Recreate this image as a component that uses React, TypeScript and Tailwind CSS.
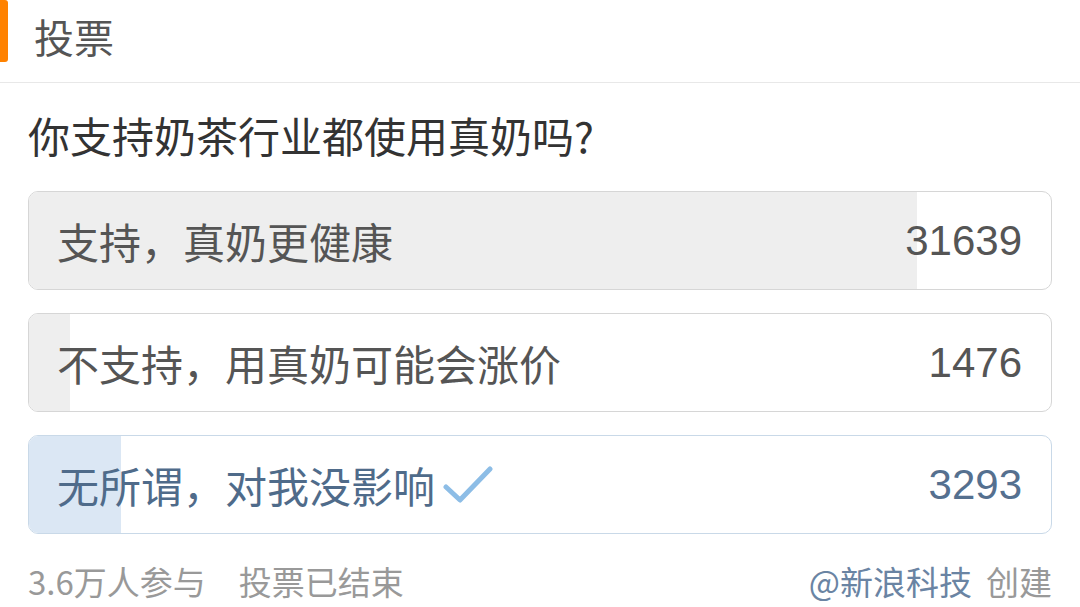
import React from "react";

const options = [
  { text: "支持，真奶更健康", count: 31639, voted: false },
  { text: "不支持，用真奶可能会涨价", count: 1476, voted: false },
  { text: "无所谓，对我没影响", count: 3293, voted: true },
];
const total = 36408;

export default function App() {
  return (
    <div
      className="w-[1080px] h-[607px] bg-white overflow-hidden"
      style={{ fontFamily: '"Noto Sans CJK SC", "Noto Sans", "Liberation Sans", sans-serif' }}
    >
      <div className="relative h-[83px] border-b border-[#e8e8e8]">
        <div className="absolute left-0 top-0 w-[8px] h-[62px] bg-[#ff8200] rounded-r-[3px]" />
        <div className="flex h-[72px] items-center pl-[34px] text-[40px] leading-none text-[#555555]">投票</div>
      </div>
      <div className="flex h-[104px] items-center px-[28px] text-[42px] leading-none text-[#333333]">
        你支持奶茶行业都使用真奶吗?
      </div>
      <div className="mt-[4px] flex flex-col gap-[23px] px-[28px]">
        {options.map((o) => {
          const pct = (o.count / total) * 100;
          return (
            <div
              key={o.text}
              className={
                "relative h-[99px] rounded-[10px] border overflow-hidden " +
                (o.voted ? "border-[#c9d9e8] bg-white" : "border-[#d6d6d6] bg-white")
              }
            >
              <div
                className={"absolute left-0 top-0 bottom-0 " + (o.voted ? "bg-[#dbe7f4]" : "bg-[#eeeeee]")}
                style={{ width: pct + "%" }}
              />
              <div className="relative flex h-full items-center justify-between pl-[28px] pr-[29px]">
                <div
                  className={
                    "flex items-center text-[42px] leading-none " + (o.voted ? "text-[#4f6b8a]" : "text-[#555555]")
                  }
                >
                  <span>{o.text}</span>
                  {o.voted && (
                    <svg width="50" height="40" viewBox="0 0 50 40" className="ml-[8px]">
                      <path d="M3 22 L17 35 L47 4" fill="none" stroke="#8dbde6" strokeWidth="5" strokeLinecap="round" strokeLinejoin="round" />
                    </svg>
                  )}
                </div>
                <div
                  className={"text-[42px] leading-none " + (o.voted ? "text-[#55708f]" : "text-[#555555]")}
                  style={{ fontFamily: '"Liberation Sans", sans-serif' }}
                >
                  {o.count}
                </div>
              </div>
            </div>
          );
        })}
      </div>
      <div className="mt-[27px] flex h-[40px] items-center justify-between px-[28px] text-[33px] leading-none text-[#999999]">
        <div className="flex items-center">
          <span>3.6万人参与</span>
          <span className="ml-[33px]">投票已结束</span>
        </div>
        <div className="flex items-center">
          <span className="text-[#6a84a3]">@新浪科技</span>
          <span className="ml-[14px]">创建</span>
        </div>
      </div>
    </div>
  );
}
